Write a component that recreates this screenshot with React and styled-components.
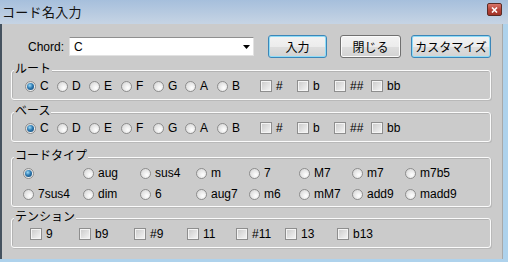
import React from "react";
import styled, { createGlobalStyle, css } from "styled-components";

const Global = createGlobalStyle`
  html, body { margin: 0; padding: 0; }
  body {
    width: 508px; height: 262px; overflow: hidden;
    font-family: "Liberation Sans", "Noto Sans CJK JP", sans-serif;
    font-size: 12px; color: #000;
  }
`;

const BG = "#cbcbcb";

const Window = styled.div`
  width: 508px; height: 262px;
  display: flex; flex-direction: column;
  background: #aed2ec;
`;

const TitleBar = styled.div`
  height: 24px; flex: none;
  display: flex; align-items: flex-start; justify-content: space-between;
  padding: 0 6px 0 2px;
  background: linear-gradient(#a6bfdc, #c6d4e4);
`;

const Title = styled.span`
  font-family: "Noto Sans CJK JP", sans-serif;
  font-size: 13px; line-height: 24px; color: #111;
  letter-spacing: 0.3px;
`;

const CloseBtn = styled.span`
  margin-top: 3px;
  width: 15px; height: 13px; box-sizing: border-box;
  border: 1px solid #5a2b25; border-radius: 2px;
  background: linear-gradient(#d9766a, #b8453a 50%, #a13328);
  display: flex; align-items: center; justify-content: center;
`;

const Client = styled.div`
  flex: 1;
  margin: 0 5px 3px 0;
  border-left: 2px solid #45525f;
  border-right: 1px solid #a9a9a9;
  background: ${BG};
  padding: 11px 0 0 9px;
  display: flex; flex-direction: column;
`;

const ChordRow = styled.div`
  display: flex; align-items: center; height: 23px;
  padding-left: 17px;
`;

const FieldLabel = styled.span`
  width: 36px; line-height: 14px;
`;

const Combo = styled.div`
  width: 185px; height: 19px; box-sizing: border-box; margin-left: 5px;
  background: #fff;
  border: 1px solid #e2e2e2; border-top-color: #8f8f8f;
  display: flex; align-items: center; justify-content: space-between;
  padding: 0 3px 0 4px;
`;

const Btn = styled.button`
  width: ${(p) => p.$w}px; height: 23px; margin-left: ${(p) => p.$ml}px;
  box-sizing: border-box; padding: 0;
  font-family: "Noto Sans CJK JP", sans-serif; font-size: 12px; color: #000;
  border: 1px solid ${(p) => (p.$focus ? "#3c86b8" : "#707070")};
  border-radius: 3px;
  background: linear-gradient(#f3f3f3 0%, #ececec 50%, #dedede 52%, #d2d2d2 100%);
  box-shadow: inset 0 0 0 1px ${(p) => (p.$focus ? "#8fdcf7" : "#fbfbfb")};
`;

const Group = styled.div`
  position: relative;
  width: 480px; box-sizing: border-box;
  margin-top: ${(p) => p.$mt}px;
  border: 1px solid #fbfbfb; border-radius: 3px;
  box-shadow: inset 1px 1px 0 #b3b3b3, 1px 1px 0 #b9b9b9;
  padding: 8px 0 ${(p) => p.$pb ?? 6}px ${(p) => p.$pl}px;
`;

const Legend = styled.span`
  position: absolute; top: -10px; left: 2px;
  padding: 0 1px;
  background: ${BG};
  font-family: "Noto Sans CJK JP", sans-serif;
  font-size: 12px; line-height: 14px;
`;

const Row = styled.div`
  display: flex; align-items: center; height: 14px;
`;

const TypeGrid = styled.div`
  display: grid;
  grid-template-columns: 60px 57px 56px 53px 50px 53px 53px auto;
  grid-auto-rows: 14px;
  row-gap: 7px;
`;

const Opt = styled.span`
  display: flex; align-items: center; gap: 4px;
  width: ${(p) => (p.$w ? `${p.$w}px` : "auto")};
  flex: none; height: 14px; white-space: nowrap;
  margin-left: ${(p) => p.$ml || 0}px;
  line-height: 14px;
`;

const Radio = styled.span`
  position: relative; flex: none;
  width: 11px; height: 11px; box-sizing: border-box;
  border-radius: 50%;
  border: 1px solid #8d8d8d;
  background: radial-gradient(circle at 65% 65%, #ffffff, #dadada 80%);
  ${(p) =>
    p.$on &&
    css`
      &::after {
        content: "";
        position: absolute; inset: 1px;
        border-radius: 50%;
        background: radial-gradient(circle at 40% 35%, #9fdcf8 0, #2d7ab2 45%, #0e3c66 100%);
      }
    `}
`;

const Check = styled.span`
  flex: none;
  width: 12px; height: 12px; box-sizing: border-box;
  border: 1px solid #8e8e8e;
  box-shadow: inset 0 0 0 1px #f4f4f4;
  background: linear-gradient(135deg, #c9c9c9, #f6f6f6);
`;

const notes = ["C", "D", "E", "F", "G", "A", "B"];
const accs = ["#", "b", "##", "bb"];
const types = [
  "", "aug", "sus4", "m", "7", "M7", "m7", "m7b5",
  "7sus4", "dim", "6", "aug7", "m6", "mM7", "add9", "madd9",
];
const tensions = [
  ["9", 49], ["b9", 55], ["#9", 53], ["11", 49], ["#11", 49], ["13", 52], ["b13", 0],
];

function NoteGroup({ title, mt }) {
  return (
    <Group $mt={mt} $pl={13}>
      <Legend>{title}</Legend>
      <Row>
        {notes.map((n, i) => (
          <Opt key={n} $w={32}>
            <Radio $on={i === 0} />
            {n}
          </Opt>
        ))}
        {accs.map((a, i) => (
          <Opt key={a} $w={37} $ml={i === 0 ? 11 : 0}>
            <Check />
            {a}
          </Opt>
        ))}
      </Row>
    </Group>
  );
}

export default function App() {
  return (
    <>
      <Global />
      <Window>
        <TitleBar>
          <Title>コード名入力</Title>
          <CloseBtn>
            <svg width="7" height="6" viewBox="0 0 7 6">
              <path d="M1 0.5 L6 5.5 M6 0.5 L1 5.5" stroke="#fff" strokeWidth="1.6" />
            </svg>
          </CloseBtn>
        </TitleBar>
        <Client>
          <ChordRow>
            <FieldLabel>Chord:</FieldLabel>
            <Combo>
              <span>C</span>
              <svg width="7" height="4" viewBox="0 0 7 4">
                <path d="M0 0 H7 L3.5 4 Z" fill="#000" />
              </svg>
            </Combo>
            <Btn $w={59} $ml={14} $focus>入力</Btn>
            <Btn $w={61} $ml={13}>閉じる</Btn>
            <Btn $w={80} $ml={10} $focus>カスタマイズ</Btn>
          </ChordRow>
          <NoteGroup title="ルート" mt={12} />
          <NoteGroup title="ベース" mt={12} />
          <Group $mt={15} $pl={11} $pb={5}>
            <Legend>コードタイプ</Legend>
            <TypeGrid>
              {types.map((t, i) => (
                <Opt key={i}>
                  <Radio $on={i === 0} />
                  {t}
                </Opt>
              ))}
            </TypeGrid>
          </Group>
          <Group $mt={11} $pl={18}>
            <Legend>テンション</Legend>
            <Row>
              {tensions.map(([t, w]) => (
                <Opt key={t} $w={w}>
                  <Check />
                  {t}
                </Opt>
              ))}
            </Row>
          </Group>
        </Client>
      </Window>
    </>
  );
}
